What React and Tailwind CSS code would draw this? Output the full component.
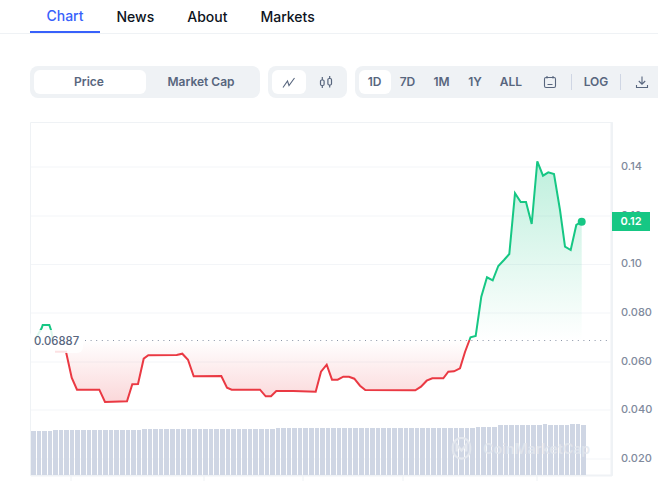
const red = [[55,351.7],[66,351.7],[71.7,377.7],[77,389.7],[99.3,389.7],[105,402],[127,401.3],[132.3,384.3],[138,384],[143.7,358.7],[148.3,355.3],[176.7,355],[182.3,353.7],[188,359.7],[193.7,376.3],[221.3,376],[227,387.7],[231.7,389.7],[260,389.7],[265.7,396.3],[271,396.3],[276.3,391],[293.3,391],[315.7,391.7],[321,371.7],[326.7,364.7],[332,379.7],[337.7,379.7],[343.3,376.7],[349,376.7],[354.3,378.7],[360,385.7],[365.3,390],[415.3,390.3],[421,386.7],[426.7,380.7],[432.3,378.3],[443.3,378.3],[448.3,371.7],[454,371.3],[460,368.3],[465,352],[469.5,340]];
const green = [[469.5,340],[470.5,337.3],[475.7,336],[481.3,296.7],[487,277.3],[492.7,280.3],[498.3,266],[504,260],[509.3,254],[515,193.3],[520.7,202],[526,202],[531.7,224],[537.3,161.3],[543,175.7],[548.3,172.3],[554,174],[560,210],[565,246.7],[570.7,250],[576.3,225],[581.7,221.7]];
const greenStart = [[35,340],[41.7,328],[42.7,325],[49.3,325],[51,330],[53,340]];
const toPath = (p) => p.map((q) => q.join(",")).join(" ");
const bars = Array.from({ length: 100 }, (_, i) => {
  const x = Math.round(31 + i * 5.56);
  const next = Math.round(31 + (i + 1) * 5.56);
  let top = 430;
  if (i < 4) top = 431;
  else if (i < 20) top = 430;
  else if (i < 44) top = 429;
  else if (i < 71) top = 428;
  else if (i < 80) top = 428;
  else if (i < 84) top = 427;
  else if (i < 91) top = 425;
  else if (i === 92) top = 424;
  else top = 425;
  if (i >= 97 && i < 99) top = 424;
  return { x, top, w: next - x - 1 };
});
const grids = [167, 216, 264.5, 313, 362, 410, 459];
const labels = [["0.14", 166], ["0.12", 215], ["0.10", 263], ["0.080", 312], ["0.060", 361], ["0.040", 409], ["0.020", 458]];
const ticks = [71, 204, 303, 403, 537];

function Tab({ children, active }) {
  return (
    <div className={active ? "flex h-full w-[70px] items-center justify-center border-b-2 border-[#3861fb] text-[#3861fb]" : "flex h-full items-center justify-center px-[16.5px] text-[#0d1421]"}>
      {children}
    </div>
  );
}

function Btn({ children, active, className }) {
  return (
    <div className={`flex h-6 shrink-0 items-center justify-center rounded-md ${active ? "bg-white" : ""} ${className}`}>
      {children}
    </div>
  );
}

export default function App() {
  return (
    <div className="relative h-[483px] w-[658px] overflow-hidden bg-white font-['Inter',sans-serif]">
      <div className="flex h-[34px] items-stretch border-b border-[#eff2f5] pl-[30px] text-sm font-medium">
        <Tab active>Chart</Tab>
        <Tab>News</Tab>
        <Tab>About</Tab>
        <Tab>Markets</Tab>
      </div>

      <div className="mt-[32px] flex h-8 gap-2 pl-[30px] text-xs font-semibold text-[#58667e]">
        <div className="flex w-[230px] shrink-0 items-center rounded-lg bg-[#eff2f5] px-1">
          <Btn active className="w-[112px] pr-[2px]">Price</Btn>
          <Btn className="w-[110px]">Market Cap</Btn>
        </div>
        <div className="flex w-[79px] shrink-0 items-center rounded-lg bg-[#eff2f5] pl-1">
          <Btn active className="w-[34px]">
            <svg width="14" height="14" viewBox="0 0 14 14" fill="none" stroke="#58667e" strokeWidth="1.1">
              <path d="M1 12.5 5.5 6l1.5 4.5L12.5 3" />
            </svg>
          </Btn>
          <Btn className="ml-[1px] w-[37px]">
            <svg width="14" height="14" viewBox="0 0 14 14" fill="none" stroke="#58667e" strokeWidth="1.2">
              <rect x="1.5" y="5" width="3.6" height="5.5" rx="1.2" />
              <rect x="8.9" y="3.5" width="3.6" height="6.5" rx="1.2" />
              <path d="M3.3 2v3M3.3 10.5V13M10.7 1v2.5M10.7 10v2.5" />
            </svg>
          </Btn>
        </div>
        <div className="flex w-[310px] shrink-0 items-center rounded-lg bg-[#eff2f5] pl-1">
          <Btn active className="w-8 pr-[1px]">1D</Btn>
          <Btn className="w-[34px] pr-[1px]">7D</Btn>
          <Btn className="w-[34px] pr-[1px]">1M</Btn>
          <Btn className="w-[32px]">1Y</Btn>
          <Btn className="w-[40px]">ALL</Btn>
          <Btn className="ml-[3px] w-[32px]">
            <svg width="14" height="14" viewBox="0 0 14 14" fill="none" stroke="#58667e" strokeWidth="1.1">
              <rect x="1.5" y="2.5" width="11" height="10" rx="1.5" />
              <path d="M4 1v2.5M10 1v2.5M4.5 9.5h5" />
            </svg>
          </Btn>
          <div className="ml-[5px] h-4 w-px bg-[#cfd6e4]" />
          <Btn className="w-[48px]">LOG</Btn>
          <div className="h-4 w-px bg-[#cfd6e4]" />
          <Btn className="w-[42px]">
            <svg width="14" height="14" viewBox="0 0 14 14" fill="none" stroke="#58667e" strokeWidth="1.1">
              <path d="M7 1.5v7.5M3.8 6 7 9.2 10.2 6M1.5 10v2.5h11V10" />
            </svg>
          </Btn>
        </div>
      </div>

      <div className="pointer-events-none absolute left-0 top-0 h-[483px] w-[658px]">
        <svg width="658" height="483" viewBox="0 0 658 483" className="absolute left-0 top-0">
          <defs>
            <linearGradient id="redFill" x1="0" y1="340" x2="0" y2="402" gradientUnits="userSpaceOnUse">
              <stop offset="0" stopColor="#ea3943" stopOpacity="0" />
              <stop offset="1" stopColor="#ea3943" stopOpacity="0.2" />
            </linearGradient>
            <linearGradient id="greenFill" x1="0" y1="161" x2="0" y2="340" gradientUnits="userSpaceOnUse">
              <stop offset="0" stopColor="#16c784" stopOpacity="0.28" />
              <stop offset="1" stopColor="#16c784" stopOpacity="0" />
            </linearGradient>
          </defs>
          <path d="M30.5 122.5H612.5V475.5H30.5Z" fill="none" stroke="#eff2f5" />
          <path d="M31 475.5H612" stroke="#eff2f5" strokeWidth="2" />
          <path d="M611.5 122V476" stroke="#eff2f5" strokeWidth="2" />
          {grids.map((y) => (
            <line key={y} x1="31" x2="611" y1={y} y2={y} stroke="#f3f5f8" />
          ))}
          {ticks.map((x) => (
            <line key={x} x1={x} x2={x} y1="476" y2="481" stroke="#eff2f5" />
          ))}
          {bars.map((b) => (
            <rect key={b.x} x={b.x} y={b.top} width={b.w} height={475 - b.top} fill="#cfd6e4" shapeRendering="crispEdges" />
          ))}
          <polygon points={`${toPath(red)} 55,340`} fill="url(#redFill)" />
          <polygon points={`${toPath(green)} 581.7,340`} fill="url(#greenFill)" />
          <polygon points={toPath(greenStart)} fill="url(#greenFill)" />
          <line x1="85" x2="609" y1="340.5" y2="340.5" stroke="#8a94a6" strokeDasharray="1 4.6" />
          <polyline points={toPath(greenStart)} fill="none" stroke="#16c784" strokeWidth="2" />
          <polyline points={toPath(red)} fill="none" stroke="#ea3943" strokeWidth="2" />
          <polyline points={toPath(green)} fill="none" stroke="#16c784" strokeWidth="2" />
          <circle cx="581.7" cy="221.7" r="4" fill="#16c784" />
        </svg>

        <div className="absolute left-[30px] top-[330px] flex h-[23px] w-[53px] items-center justify-center rounded-md bg-white/85 pb-[1px] text-[11.3px] font-medium text-[#58667e]">0.06887</div>

        {labels.map(([t, y]) => (
          <div key={t} className="absolute left-[621px] -translate-y-1/2 text-[11px] font-medium leading-4 text-[#808a9d]" style={{ top: y }}>{t}</div>
        ))}
        <div className="absolute left-[612px] top-[212px] flex h-[19px] w-[38px] items-center justify-center bg-[#16c784] text-[11px] font-semibold text-white">0.12</div>

        <div className="absolute left-[450px] top-[437px] flex items-center gap-[10px] text-[14.2px] font-semibold text-[#e3e7ee]/80">
          <svg width="23" height="23" viewBox="0 0 24 24" fill="none" stroke="#e3e7ee" strokeWidth="2.4">
            <path d="M3 13.5V10a9 9 0 0 1 18 0v3.5a9 9 0 0 1-18 0" />
            <path d="M7 15V8l5 6 5-6v7" />
          </svg>
          <span>CoinMarketCap</span>
        </div>
      </div>
    </div>
  );
}
